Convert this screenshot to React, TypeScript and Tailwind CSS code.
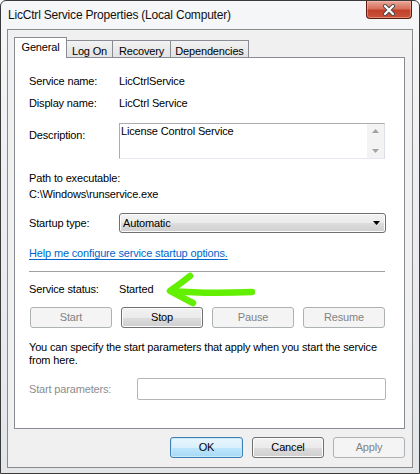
import React from 'react'

type BtnProps = {
  label: string
  disabled?: boolean
  primary?: boolean
  className?: string
}

const Button: React.FC<BtnProps> = ({ label, disabled, primary, className = '' }) => {
  if (disabled) {
    return (
      <div className={`flex items-center justify-center h-[21px] rounded-[3px] border border-[#adb2b5] bg-[#f4f4f4] text-[#838383] ${className}`}>
        {label}
      </div>
    )
  }
  if (primary) {
    return (
      <div className={`flex items-center justify-center h-[21px] rounded-[3px] border border-[#3c7fb1] bg-[linear-gradient(#eaf6fd_0%,#d9f0fc_50%,#bee6fd_51%,#a7d9f5_100%)] shadow-[inset_0_0_0_1px_#c8eafc] text-black ${className}`}>
        {label}
      </div>
    )
  }
  return (
    <div className={`flex items-center justify-center h-[21px] rounded-[3px] border border-[#707070] bg-[linear-gradient(#f2f2f2_0%,#ebebeb_50%,#dddddd_51%,#cfcfcf_100%)] shadow-[inset_0_0_0_1px_#fcfcfc] text-black ${className}`}>
      {label}
    </div>
  )
}

export default function App() {
  return (
    <div className="w-[420px] h-[474px] flex flex-col rounded-t-[6px] border border-[#3a3a3a] bg-[linear-gradient(180deg,#f5f7f9_0%,#eceef1_40%,#e3e6e9_100%)] font-['Liberation_Sans',Arial,sans-serif] text-[11px] tracking-[-0.16px] text-black select-none">
      {/* Title bar */}
      <div className="h-[28px] flex items-start justify-between pl-[7px] pr-[7px]">
        <div className="pt-[7px] text-[12px] tracking-[-0.2px] leading-[15px] text-[#111]">
          LicCtrl Service Properties (Local Computer)
        </div>
        <div className="w-[46px] h-[18px] rounded-b-[4px] border border-t-0 border-[#5e1a10] bg-[linear-gradient(180deg,#e9a99b_0%,#d7705c_45%,#c2402a_55%,#c9553a_100%)] shadow-[inset_0_0_0_1px_rgba(255,200,190,0.45)] flex items-center justify-center">
          <svg width="14" height="12" viewBox="0 0 14 12">
            <path d="M3 2 L11 10 M11 2 L3 10" stroke="#4a4a4a" strokeWidth="4" strokeLinecap="round" />
            <path d="M3 2 L11 10 M11 2 L3 10" stroke="#ffffff" strokeWidth="2.2" strokeLinecap="round" />
          </svg>
        </div>
      </div>

      {/* Client area */}
      <div className="flex-1 mx-[6px] mb-[5px] border border-[#8a8a8a] bg-[#f0f0f0] flex flex-col">
        {/* Tabs */}
        <div className="flex items-end ml-[6px] mt-[7px] h-[20px]">
          <div className="relative z-10 w-[53px] h-[21px] -mb-px border border-b-0 border-[#898c95] bg-white flex justify-center pt-[1px]">
            General
          </div>
          <div className="w-[46px] h-[17px] border-t border-r border-[#898c95] bg-[linear-gradient(#f2f2f2,#e3e3e3)] flex justify-center pt-[2px]">
            Log On
          </div>
          <div className="w-[58px] h-[17px] border-t border-r border-[#898c95] bg-[linear-gradient(#f2f2f2,#e3e3e3)] flex justify-center pt-[2px]">
            Recovery
          </div>
          <div className="w-[78px] h-[17px] border-t border-r border-[#898c95] bg-[linear-gradient(#f2f2f2,#e3e3e3)] flex justify-center pt-[2px]">
            Dependencies
          </div>
        </div>

        {/* Tab panel */}
        <div className="ml-[6px] w-[391px] h-[372px] border border-[#898c95] bg-white flex flex-col pl-[14px] leading-[13px]">
          <div className="flex mt-[17px]">
            <div className="w-[90px] shrink-0">Service name:</div>
            <div>LicCtrlService</div>
          </div>
          <div className="flex mt-[9px]">
            <div className="w-[90px] shrink-0">Display name:</div>
            <div>LicCtrl Service</div>
          </div>
          <div className="flex items-start mt-[13px]">
            <div className="w-[90px] shrink-0 mt-[6px]">Description:</div>
            <div className="w-[266px] h-[36px] flex border border-[#abadb3] border-b-[#e3e9ef] border-r-[#dbdfe6] bg-white">
              <div className="flex-1 pl-[1px] pt-[1px]">License Control Service</div>
              <div className="w-[17px] bg-[#f3f3f3] flex flex-col items-center justify-between py-[5px]">
                <svg width="7" height="4" viewBox="0 0 7 4">
                  <path d="M0 4 L3.5 0 L7 4 Z" fill="#a3a3a3" />
                </svg>
                <svg width="7" height="4" viewBox="0 0 7 4">
                  <path d="M0 0 L3.5 4 L7 0 Z" fill="#a3a3a3" />
                </svg>
              </div>
            </div>
          </div>
          <div className="mt-[13px]">Path to executable:</div>
          <div className="mt-[3px]">C:\Windows\runservice.exe</div>
          <div className="flex items-center mt-[12px]">
            <div className="w-[90px] shrink-0">Startup type:</div>
            <div className="w-[267px] h-[20px] rounded-[3px] border border-[#707070] bg-[linear-gradient(#f2f2f2_0%,#ebebeb_50%,#dddddd_51%,#cfcfcf_100%)] shadow-[inset_0_0_0_1px_#fcfcfc] flex items-center justify-between pl-[3px] pr-[5px]">
              <span>Automatic</span>
              <svg width="7" height="4" viewBox="0 0 7 4">
                <path d="M0 0 L3.5 4 L7 0 Z" fill="#000" />
              </svg>
            </div>
          </div>
          <div className="mt-[14px]">
            <span className="text-[#0066cc] underline underline-offset-[2px]">Help me configure service startup options.</span>
          </div>
          <div className="mt-[11px] mr-[19px] border-t border-[#a0a0a0]" />
          <div className="flex items-center mt-[11px]">
            <div className="w-[90px] shrink-0">Service status:</div>
            <div>Started</div>
            <svg width="92" height="36" viewBox="0 0 92 36" className="-my-[12px] ml-[13px]">
              <path
                d="M24 4 Q14 12 4 19 Q15 25 27 31 M6 19 Q40 22 86 20"
                fill="none"
                stroke="#62f000"
                strokeWidth="6.5"
                strokeLinecap="round"
                strokeLinejoin="round"
              />
            </svg>
          </div>
          <div className="grid grid-cols-4 gap-[9px] w-[355px] ml-[1px] mt-[11px]">
            <Button label="Start" disabled />
            <Button label="Stop" />
            <Button label="Pause" disabled />
            <Button label="Resume" disabled />
          </div>
          <div className="mt-[13px] w-[360px]">
            You can specify the start parameters that apply when you start the service from here.
          </div>
          <div className="flex items-center mt-[11px]">
            <div className="w-[108px] shrink-0 text-[#8d8d8d]">Start parameters:</div>
            <div className="w-[249px] h-[22px] rounded-[2px] border border-[#b5b5b5] bg-white" />
          </div>
        </div>

        {/* Dialog buttons */}
        <div className="flex justify-end gap-[9px] mt-[8px] mr-[7px]">
          <Button label="OK" primary className="w-[73px]" />
          <Button label="Cancel" className="w-[72px]" />
          <Button label="Apply" disabled className="w-[72px]" />
        </div>
      </div>
    </div>
  )
}
